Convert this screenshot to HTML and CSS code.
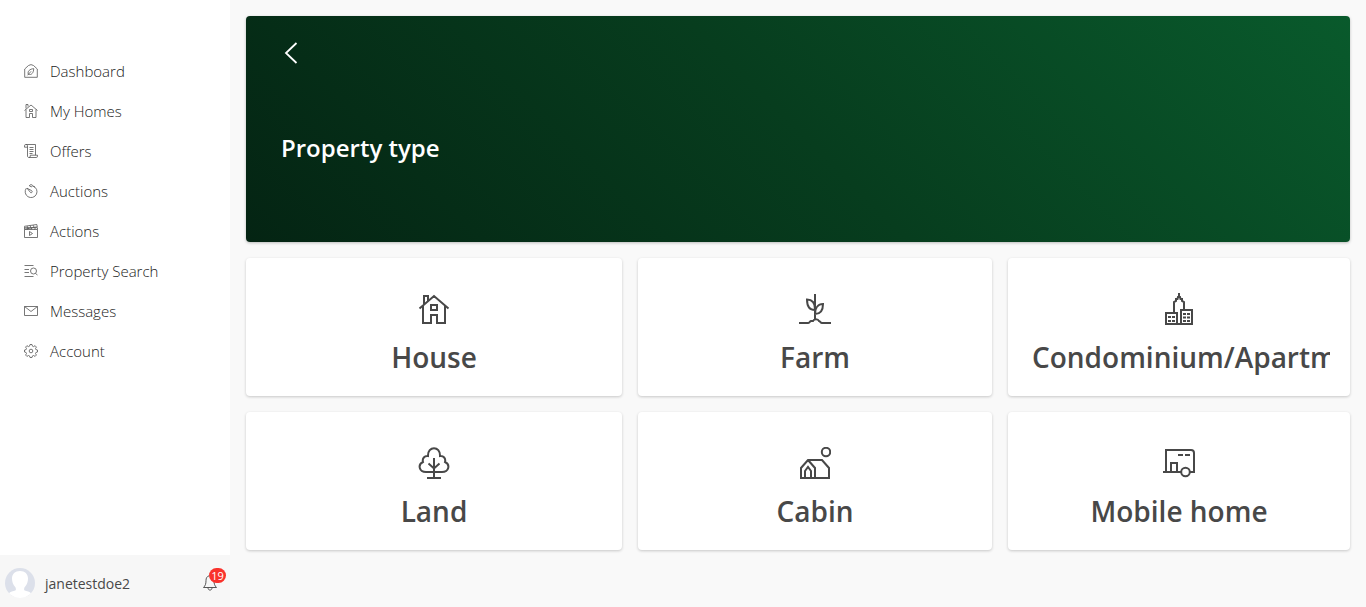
FILE: index.html
```html
<!DOCTYPE html>
<html lang="en">
<head>
  <meta charset="UTF-8" />
  <meta name="viewport" content="width=device-width, initial-scale=1.0"/>
  <title>Property type</title>
  <link rel="stylesheet" href="styles.css">
</head>
<body>
  <aside class="sidebar">
    <nav class="menu">
      <a href="#" class="menu-link">
        <svg viewBox="0 0 14 14"><path d="M.7 13.300V5L4.500 1.500 7 .6l2.500.9L13.300 5v8.300zM4.300 10.200c-1-3 1.500-5.200 5.400-5.600 0 4-2.200 7-5.400 5.600zM3.500 11.300l3.600-4"/></svg>
        Dashboard
      </a>
      <a href="#" class="menu-link">
        <svg viewBox="0 0 14 14"><path d="M.5 6.500L7 1l6.500 5.500M2 5.500v8h3.500v-4h3v4H12v-8M2 4.500v-4h2v2M5.500 5.500h3v2h-3z"/></svg>
        My Homes
      </a>
      <a href="#" class="menu-link">
        <svg viewBox="0 0 14 14"><path d="M3.500 3.200H.5V1.700C.5 1 1 .5 1.800.5h9.700v10.700M1.800.5c1.200 0 1.700.5 1.700 1.500v10c0 1 .6 1.500 1.500 1.500h7.200c.9 0 1.300-.5 1.300-1.300v-1H6.300v1c0 .8-.5 1.300-1.300 1.300M5.500 3.500h4M5.500 5.500h4M5.500 7.500h4M5.500 9.500h3"/></svg>
        Offers
      </a>
      <a href="#" class="menu-link">
        <svg viewBox="0 0 14 14"><path d="M9 2.100a5.900 5.900 0 1 1-6.600 2M5.200 1.700L7 .5l1.800 1L7.500 3zM3 4.200l4.700 2.500c.8.600.6 1.900-.4 2-.6.100-1-.2-1.200-.7zM9.500 2.500l1.500.5"/></svg>
        Auctions
      </a>
      <a href="#" class="menu-link">
        <svg viewBox="0 0 14 14"><path d="M.5 5.500h13v8H.5zM.5 5.200L.4 2.300 12.800.5l.5 2.300zM3 2l1.200 2.800M6 1.500l1.200 2.800M9 1.100l1.300 2.500M.5 3.700h13v1.800M3.500 5.500l1-1.800M7 5.500l1-1.800M10.500 5.500l1-1.800M5.500 7.500v4l3-2z"/></svg>
        Actions
      </a>
      <a href="#" class="menu-link">
        <svg viewBox="0 0 14 14"><path d="M.5 1.500h9M.5 5.500H5M.5 8.500H5M.5 12.500h9M11.500 9.500l2 1.500"/><circle cx="9.500" cy="7" r="3"/></svg>
        Property Search
      </a>
      <a href="#" class="menu-link">
        <svg viewBox="0 0 14 14"><path d="M.5 2.500h13v9H.5zM.5 2.500L7 7.500l6.500-5"/></svg>
        Messages
      </a>
      <a href="#" class="menu-link">
        <svg viewBox="0 0 14 14"><path d="M5.500 2.200L6 .5h2l.5 1.700 1 .4 1.600-.9 1.300 1.400-.9 1.500.4 1 1.600.4v2l-1.600.5-.4 1 .9 1.500-1.300 1.400-1.600-.9-1 .4L8 13.500H6l-.5-1.600-1-.4-1.600.9L1.600 11l.9-1.500-.4-1L.5 8V6l1.600-.4.4-1-.9-1.500 1.300-1.400 1.600.9z"/><circle cx="7" cy="7" r="1.800"/></svg>
        Account
      </a>
    </nav>

    <div class="user-bar">
      <svg class="avatar" viewBox="0 0 30 30"><circle cx="15" cy="15" r="15" fill="#dce0ea"/><path d="M4 25.200c1-1.600 4.500-1.700 6.300-2.700 1-.6.700-2.600-.3-3.700C8 16.500 7 13.500 7 10.500 7 6 10 3 15 3s8 3 8 7.500c0 3-1 6-3 8.300-1 1.100-1.300 3.100-.3 3.700 1.800 1 5.300 1.100 6.300 2.700A15 15 0 0 1 4 25.200z" fill="#fff"/></svg>
      <span class="user-name">janetestdoe2</span>
      <button type="button" class="bell" aria-label="Notifications">
        <svg viewBox="0 0 14 16"><path d="M6 .8C3.800 1.500 3 3.300 3 5.500c0 3.500-.7 5.200-2.500 7h13c-1.800-1.800-2.500-3.500-2.500-7M5 12.700c0 3.200 4 3.200 4 0"/></svg>
        <span class="badge">19</span>
      </button>
    </div>
  </aside>

  <main class="content">
    <header class="banner">
      <a href="#" class="back" aria-label="Back">
        <svg viewBox="0 0 18 22"><path d="M15.500 1L5 11l10.500 10"/></svg>
      </a>
      <h1>Property type</h1>
    </header>

    <div class="types">
      <button type="button" class="card">
        <svg viewBox="0 0 32 32"><path d="M1.500 15.500L16 3l14.500 12.500M5 13v17h8v-8h6v8h8V13M6 11.500V3h4v5M13 12h6v5h-6z"/></svg>
        <span class="card-title">House</span>
      </button>
      <button type="button" class="card">
        <svg viewBox="0 0 32 32"><path d="M0 30h9c1.500 0 1.500-1.500 3-2h2c1-2.500 5-2.500 6 0 1 0 1.500 2 3 2h9M16 1v25M16 17c-5 0-8-3-8-10.500 5 0 8 3.500 8 9.500zM16 21c0-6 3-10 8-10 0 6.500-3 10-8 10"/></svg>
        <span class="card-title">Farm</span>
      </button>
      <button type="button" class="card">
        <svg viewBox="0 0 32 32"><path d="M3 20h11v11H3zM18 17h11v14H18zM14 31h4M11 20V9l2-1V6h1.500l.5-2h2l.500 2H19v2l2 1v8M16 0v4"/><path class="windows" d="M5 24h7M5 28h7M20 21h7M20 24.500h7M20 28h7"/></svg>
        <span class="card-title">Condominium/Apartment</span>
      </button>
      <button type="button" class="card">
        <svg viewBox="0 0 32 32"><path d="M16 11v20M9 31h14M10.500 16.500l5.500 5 5.500-5M8 25c-7 0-8.500-7.500-3-10C4 11.500 6.500 8.500 10 9 9.500-1.500 22.500-1.500 22 9c3.500-.5 6 2.500 5 6 5.500 2.500 4 10-3 10z"/></svg>
        <span class="card-title">Land</span>
      </button>
      <button type="button" class="card">
        <svg viewBox="0 0 32 32"><path d="M2 31V21l7-8h14l7 8v10zM9 13l7 8v10M6 31v-7l3-4 3 4v7"/><circle cx="27" cy="5" r="4.200"/></svg>
        <span class="card-title">Cabin</span>
      </button>
      <button type="button" class="card">
        <svg viewBox="0 0 32 32"><path d="M0 25h18M3 25V3h25q3 0 3 3v19h-4M8 25v-9h6v9M15 8h5M22 8h5"/><circle cx="22.500" cy="25" r="4.300"/></svg>
        <span class="card-title">Mobile home</span>
      </button>
    </div>
  </main>
</body>
</html>
```
FILE: styles.css
```css
* {
  box-sizing: border-box;
  margin: 0;
  padding: 0;
}

body {
  font-family: 'Open Sans', sans-serif;
  min-height: 100vh;
  display: flex;
  background-color: #f9f9f9;
  color: #484848;
}

svg {
  fill: none;
  stroke: currentColor;
}

.sidebar {
  flex: 0 0 230px;
  display: flex;
  flex-direction: column;
  justify-content: space-between;
  background: #fff;
}

.menu {
  padding-top: 51px;
}

.menu-link {
  display: flex;
  align-items: center;
  gap: 12px;
  height: 40px;
  padding: 0 24px;
  font-size: 15px;
  font-weight: 300;
  line-height: 20px;
  color: #222;
  text-decoration: none;
}

.menu-link svg {
  width: 14px;
  height: 14px;
  stroke: #555;
  stroke-width: 0.8;
}

.user-bar {
  display: flex;
  align-items: center;
  height: 52px;
  padding: 4px 11px 0 5px;
  background: #f7f7f7;
  font-size: 14px;
}

.avatar {
  width: 30px;
  height: 30px;
  margin-right: 10px;
  stroke: none;
}

.user-name {
  flex: 1;
}

.bell {
  position: relative;
  width: 16px;
  height: 16px;
  border: none;
  background: none;
  color: #444;
  font-family: inherit;
  cursor: pointer;
}

.bell svg {
  display: block;
  width: 14px;
  height: 16px;
  stroke-width: 0.9;
}

.badge {
  position: absolute;
  top: -7px;
  left: 6px;
  width: 17px;
  height: 15px;
  border-radius: 8px;
  background: #f9322c;
  color: #fff;
  font-size: 11px;
  line-height: 15px;
  text-align: center;
}

.content {
  flex: 1;
  min-width: 0;
  padding: 16px;
}

.banner {
  height: 226px;
  padding: 26px 35px;
  border-radius: 4px;
  background: linear-gradient(45deg, #042413, #073d1e 50%, #095a2c);
  box-shadow: 0 1px 3px rgba(0, 0, 0, 0.25);
  color: #fff;
}

.back {
  display: block;
  width: 20px;
  margin-bottom: 68px;
  color: #fff;
}

.back svg {
  display: block;
  width: 18px;
  height: 22px;
  stroke-width: 1.8;
}

h1 {
  font-size: 24px;
  line-height: 32px;
  font-weight: 600;
}

.types {
  display: grid;
  grid-template-columns: 188fr 177fr 171fr;
  gap: 16px;
  margin-top: 16px;
}

.card {
  display: flex;
  flex-direction: column;
  align-items: center;
  min-width: 0;
  padding: 35px 20px 19px;
  border: none;
  border-radius: 4px;
  background: #fff;
  box-shadow: 0 1px 3px rgba(0, 0, 0, 0.2);
  color: #484848;
  font-family: inherit;
  cursor: pointer;
}

.card svg {
  width: 32px;
  height: 32px;
  stroke-width: 2;
}

.card .windows {
  stroke-dasharray: 3 1;
}

.card-title {
  width: 100%;
  padding: 0 4px;
  margin-top: 12px;
  overflow: hidden;
  font-size: 28px;
  font-weight: 600;
  line-height: 40px;
  white-space: nowrap;
}
```
